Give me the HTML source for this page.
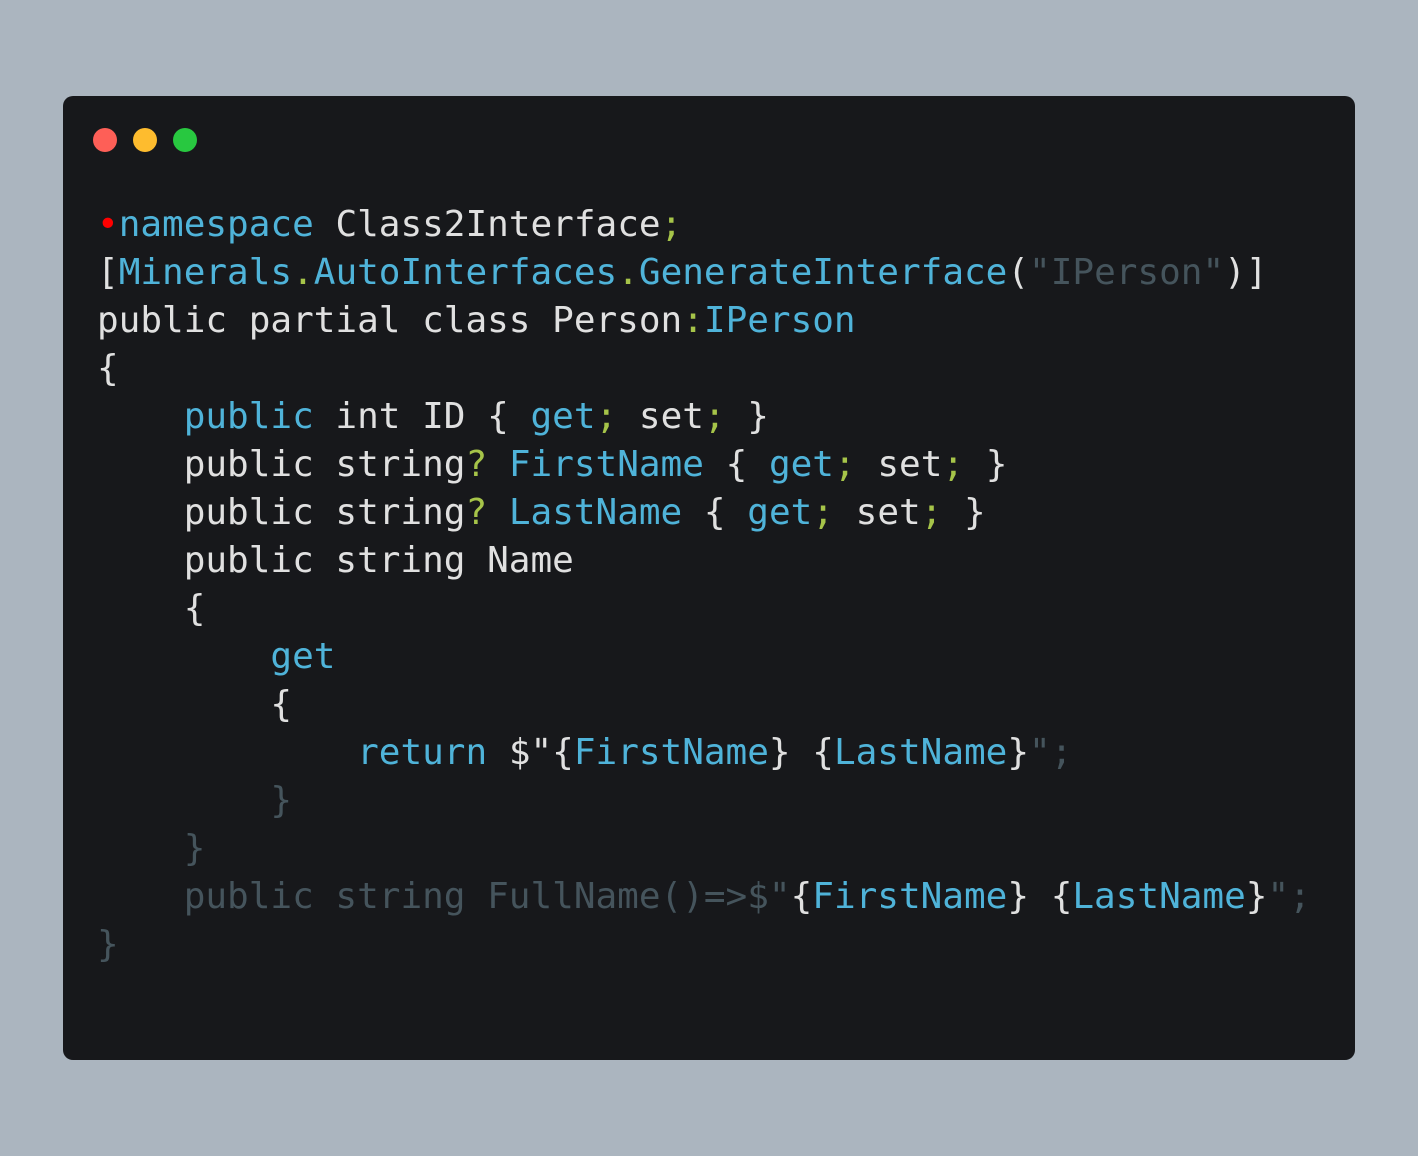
<!DOCTYPE html>
<html><head><meta charset="utf-8"><style>
html,body{margin:0;padding:0;width:1418px;height:1156px;background:#abb5bf;overflow:hidden}
.card{position:absolute;left:63px;top:96px;width:1292px;height:964px;background:#17181b;border-radius:10px}
.dot{position:absolute;top:32px;width:24px;height:24px;border-radius:50%}
pre{position:absolute;left:34px;top:105px;margin:0;font-family:"DejaVu Sans Mono","Liberation Mono",monospace;font-size:36px;line-height:48px;color:#e0e0e0}
.b{color:#4fb3d9}.g{color:#a6c449}.d{color:#45545c}.r{color:#f00}
</style></head><body>
<div class="card">
<div class="dot" style="left:30px;background:#fe5f57"></div>
<div class="dot" style="left:70px;background:#febc2e"></div>
<div class="dot" style="left:110px;background:#28c840"></div>
<pre><span class="r">•</span><span class="b">namespace</span> Class2Interface<span class="g">;</span>
[<span class="b">Minerals</span><span class="g">.</span><span class="b">AutoInterfaces</span><span class="g">.</span><span class="b">GenerateInterface</span>(<span class="d">"IPerson"</span>)]
public partial class Person<span class="g">:</span><span class="b">IPerson</span>
{
    <span class="b">public</span> int ID { <span class="b">get</span><span class="g">;</span> set<span class="g">;</span> }
    public string<span class="g">?</span> <span class="b">FirstName</span> { <span class="b">get</span><span class="g">;</span> set<span class="g">;</span> }
    public string<span class="g">?</span> <span class="b">LastName</span> { <span class="b">get</span><span class="g">;</span> set<span class="g">;</span> }
    public string Name
    {
        <span class="b">get</span>
        {
            <span class="b">return</span> $"{<span class="b">FirstName</span>} {<span class="b">LastName</span>}<span class="d">";</span>
        <span class="d">}</span>
    <span class="d">}</span>
    <span class="d">public string FullName()=&gt;$"</span>{<span class="b">FirstName</span>} {<span class="b">LastName</span>}<span class="d">";</span>
<span class="d">}</span></pre>
</div>
</body></html>
